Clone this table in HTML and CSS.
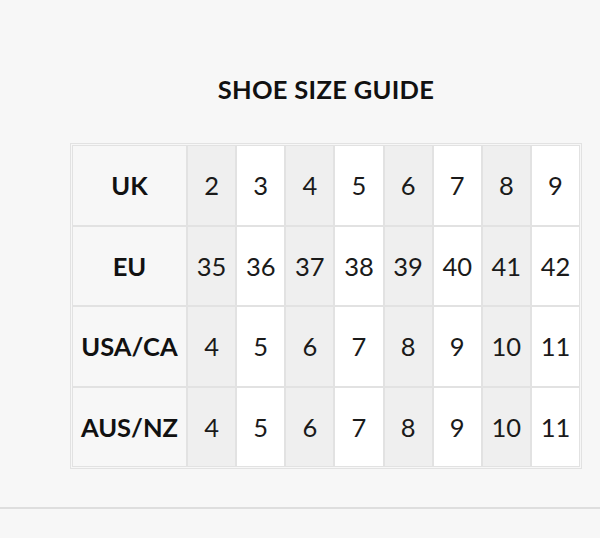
FILE: index.html
```html
<!DOCTYPE html>
<html>
<head>
<meta charset="utf-8">
<link rel="stylesheet" href="styles.css">
</head>
<body>
<div class="guide">
  <h2 class="title">SHOE SIZE GUIDE</h2>
  <table class="sizes">
    <tr><th>UK</th><td class="s">2</td><td>3</td><td class="s">4</td><td>5</td><td class="s">6</td><td>7</td><td class="s">8</td><td>9</td></tr>
    <tr><th>EU</th><td class="s">35</td><td>36</td><td class="s">37</td><td>38</td><td class="s">39</td><td>40</td><td class="s">41</td><td>42</td></tr>
    <tr><th>USA/CA</th><td class="s">4</td><td>5</td><td class="s">6</td><td>7</td><td class="s">8</td><td>9</td><td class="s">10</td><td>11</td></tr>
    <tr><th>AUS/NZ</th><td class="s">4</td><td>5</td><td class="s">6</td><td>7</td><td class="s">8</td><td>9</td><td class="s">10</td><td>11</td></tr>
  </table>
</div>
<hr class="rule">
</body>
</html>
```
FILE: styles.css
```css
html, body {
  margin: 0;
  padding: 0;
  background: #f7f7f7;
  font-family: Lato, "Open Sans", sans-serif;
  color: #111;
}
.guide {
  width: 512px;
  margin-left: 70px;
  padding-top: 73px;
}
.title {
  margin: 0;
  text-align: center;
  font-size: 25.5px;
  font-weight: 700;
  line-height: 32px;
  letter-spacing: 0.3px;
  color: #111;
}
.sizes {
  margin-top: 38px;
  width: 512px;
  border: 1px solid #e2e2e2;
  border-collapse: separate;
  border-spacing: 0;
  padding: 1px;
  table-layout: fixed;
}
.sizes th, .sizes td {
  height: 78.6px;
  border: 1px solid #e2e2e2;
  text-align: center;
  font-size: 25.5px;
  padding: 0;
  white-space: nowrap;
}
.sizes th {
  width: 113px;
  background: #f7f7f7;
  font-weight: 700;
  color: #111;
}
.sizes td {
  background: #ffffff;
  font-weight: 400;
  color: #1a1a1a;
}
.sizes td.s {
  background: #efefef;
}
.rule {
  margin: 38px 0 0;
  border: 0;
  height: 2px;
  background: #dedede;
}
```
